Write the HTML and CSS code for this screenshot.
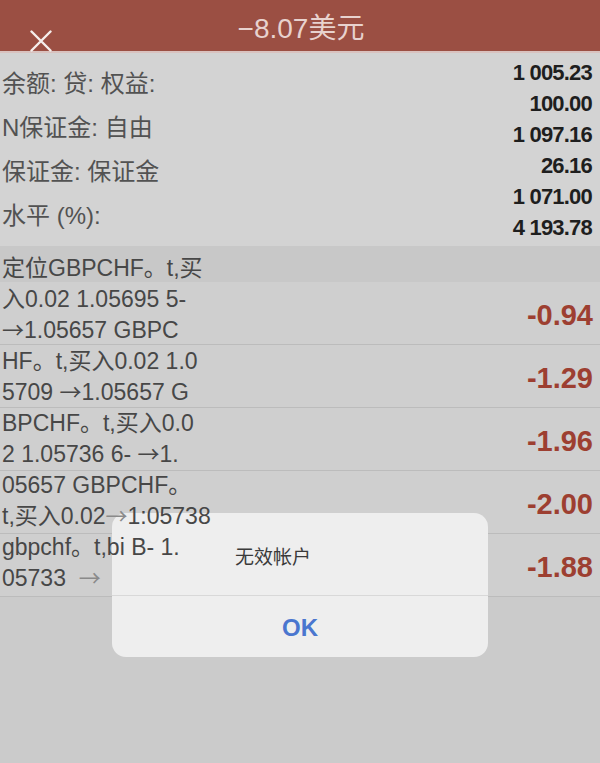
FILE: index.html
```html
<!DOCTYPE html>
<html lang="zh">
<head>
  <meta charset="UTF-8">
  <meta name="viewport" content="width=device-width, initial-scale=1.0">
  <title>-8.07美元</title>
  <link rel="stylesheet" href="styles.css">
</head>
<body>
  <header class="topbar">
    <span class="close">
      <svg width="22" height="22" viewBox="0 0 22 22"><path d="M1.5 1.5 L20.5 20.5 M20.5 1.5 L1.5 20.5" stroke="#f6eeec" stroke-width="2.4" stroke-linecap="round" fill="none"/></svg>
    </span>
    <h1 class="title">−8.07美元</h1>
  </header>

  <section class="summary">
    <div class="labels">
      <div>余额: 贷: 权益:</div>
      <div>N保证金: 自由</div>
      <div>保证金: 保证金</div>
      <div>水平 (%):</div>
    </div>
    <div class="numbers">
      <div>1 005.23</div>
      <div>100.00</div>
      <div>1 097.16</div>
      <div>26.16</div>
      <div>1 071.00</div>
      <div>4 193.78</div>
    </div>
  </section>

  <section class="trades">
    <div class="row band"></div>
    <div class="row"><span class="profit">-0.94</span></div>
    <div class="row"><span class="profit">-1.29</span></div>
    <div class="row"><span class="profit">-1.96</span></div>
    <div class="row"><span class="profit">-2.00</span></div>
    <div class="row"><span class="profit">-1.88</span></div>
    <div class="desc">
      <span>定位GBPCHF。t,买</span>
      <span>入0.02 1.05695 5-</span>
      <span><b class="arr">→</b>1.05657 GBPC</span>
      <span>HF。t,买入0.02 1.0</span>
      <span>5709 <b class="arr">→</b>1.05657 G</span>
      <span>BPCHF。t,买入0.0</span>
      <span>2 1.05736 6- <b class="arr">→</b>1.</span>
      <span>05657 GBPCHF。</span>
      <span>t,买入0.02<b class="arr faint">→</b>1:05738</span>
      <span>gbpchf。t,bi B- 1.</span>
      <span>05733 &nbsp;<b class="arr faint">→</b></span>
    </div>
  </section>

  <div class="alert">
    <div class="alert-msg">无效帐户</div>
    <div class="alert-btn">OK</div>
  </div>
</body>
</html>
```

FILE: styles.css
```css
body {
  margin: 0;
  background: #cbcbcb;
  font-family: "Liberation Sans", "Noto Sans CJK SC", sans-serif;
  color: #4a4a4a;
  width: 600px;
  height: 763px;
  overflow: hidden;
  position: relative;
}
.topbar {
  height: 53px;
  background: #9b4f43;
  border-bottom: 2px solid #d9c2bf;
  position: relative;
  box-sizing: border-box;
}
.title {
  margin: 0;
  padding: 6px 0 0 2px;
  text-align: center;
  font-size: 28px;
  font-weight: normal;
  line-height: 46px;
  color: #e8d2ce;
}
.close {
  position: absolute;
  left: 30px;
  top: 30px;
  width: 22px;
  height: 22px;
}
.close svg {
  display: block;
}
.summary {
  height: 193px;
  background: #d3d3d3;
  display: flex;
  justify-content: space-between;
}
.labels {
  padding: 9px 0 0 2px;
  font-size: 24px;
  line-height: 44px;
  color: #525252;
}
.numbers {
  padding: 4px 8px 0 0;
  text-align: right;
  font-size: 22px;
  font-weight: bold;
  line-height: 31px;
  letter-spacing: -0.8px;
  color: #1e1e1e;
}
.trades {
  display: grid;
  grid-template-columns: 1fr auto;
  grid-template-rows: 36px repeat(5, 63px);
  background: #cfcfcf;
}
.row {
  grid-column: 1 / -1;
  display: flex;
  justify-content: flex-end;
  align-items: center;
  border-bottom: 1px solid #bcbcbc;
  padding-right: 7px;
}
.row:nth-child(1) { grid-row: 1; }
.row:nth-child(2) { grid-row: 2; }
.row:nth-child(3) { grid-row: 3; }
.row:nth-child(4) { grid-row: 4; }
.row:nth-child(5) { grid-row: 5; }
.row:nth-child(6) { grid-row: 6; }
.band {
  background: #c8c8c8;
  border-bottom: none;
}
.profit {
  font-size: 29px;
  font-weight: bold;
  color: #9d3f31;
  padding-top: 4px;
}
.desc {
  grid-column: 1;
  grid-row: 1 / -1;
  z-index: 3;
  padding: 7px 0 0 2px;
  font-size: 23px;
  line-height: 31px;
  color: #474747;
}
.desc span {
  display: block;
  white-space: nowrap;
  height: 31px;
}
.arr {
  font-family: "Noto Sans CJK SC", sans-serif;
  font-weight: normal;
  font-size: 22px;
  line-height: 0;
}
.faint {
  color: #8a8a8a;
}
.alert {
  position: absolute;
  left: 112px;
  top: 513px;
  width: 376px;
  height: 144px;
  background: #eeeeee;
  border-radius: 14px;
  z-index: 2;
  display: flex;
  flex-direction: column;
}
.alert-msg {
  height: 83px;
  box-sizing: border-box;
  padding: 29px 0 0 123px;
  font-size: 19px;
  color: #3a3a3a;
  border-bottom: 1px solid #d8d8d8;
}
.alert-btn {
  flex: 1;
  display: flex;
  align-items: center;
  justify-content: center;
  font-size: 24px;
  font-weight: bold;
  color: #4a76cf;
  padding-top: 2px;
}
```
